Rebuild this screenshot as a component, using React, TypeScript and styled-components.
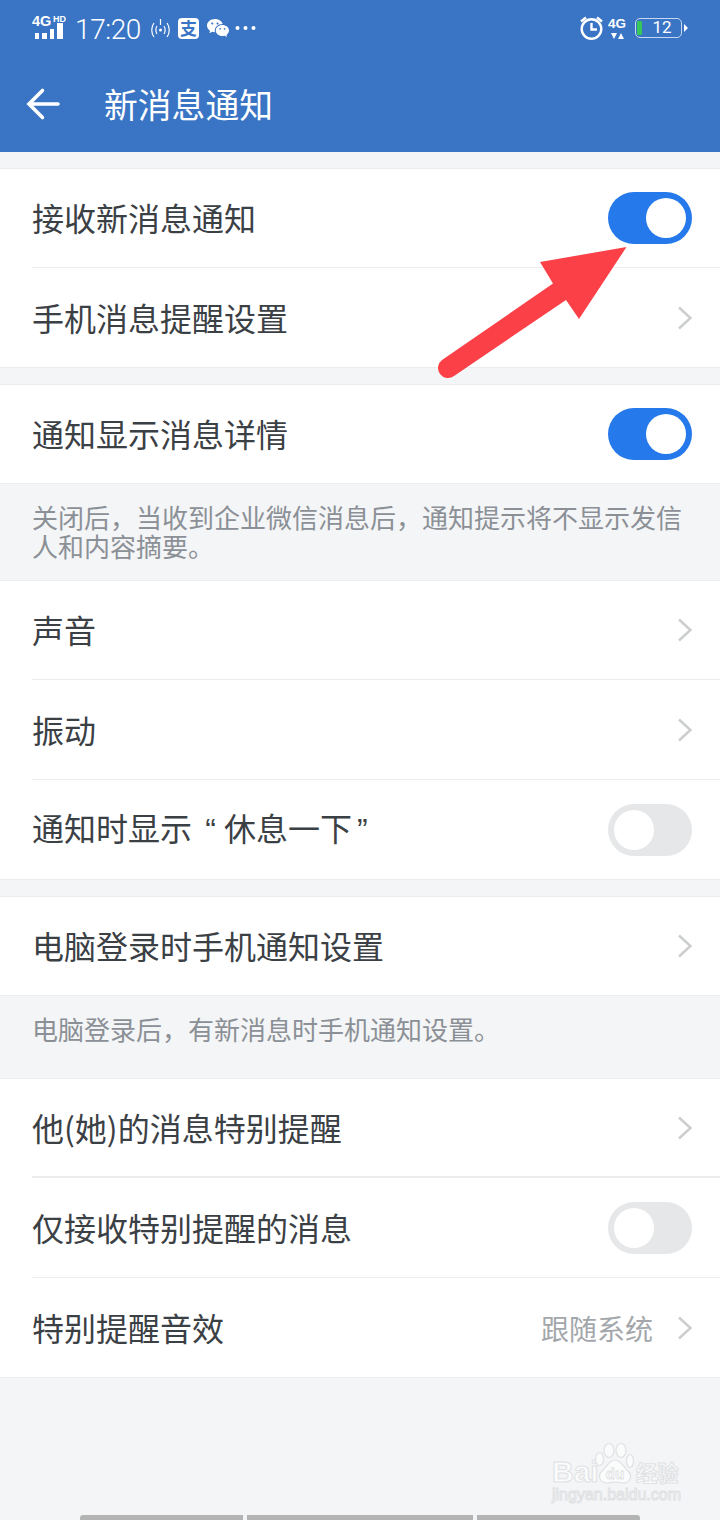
import React from 'react';
import styled, { createGlobalStyle } from 'styled-components';
import { RiWechatFill } from 'react-icons/ri';

const cjk = `'Noto Sans CJK SC', 'Noto Sans', sans-serif`;

const GlobalStyle = createGlobalStyle`
	html,
	body {
		margin: 0;
		padding: 0;
		background: #f4f5f7;
	}
	* {
		box-sizing: border-box;
	}
`;

const Page = styled.div`
	position: relative;
	width: 720px;
	height: 1520px;
	overflow: hidden;
	background: #f4f5f7;
	font-family: ${cjk};
	color: #3b4045;
`;

const Header = styled.header`
	height: 152px;
	background: #3a75c5;
	color: #fff;
	margin-bottom: 16px;
`;

const StatusBar = styled.div`
	height: 56px;
	padding: 0 32px;
	display: flex;
	align-items: center;
	justify-content: space-between;
`;

const StatusGroup = styled.div`
	display: flex;
	align-items: center;
`;

const Time = styled.span`
	font-family: Roboto, 'Liberation Sans', sans-serif;
	font-size: 28px;
	font-weight: 300;
	letter-spacing: -0.4px;
	margin: 2px 9px 0 9px;
`;

const AlipayBadge = styled.span`
	width: 21px;
	height: 21px;
	margin: 0 7px 0 7px;
	border-radius: 4px;
	background: #fff;
	color: #3a75c5;
	font-size: 17px;
	font-weight: 700;
	line-height: 20px;
	text-align: center;
`;

const WechatIcon = styled(RiWechatFill)`
	margin-right: 5px;
`;

const BatteryBody = styled.div`
	position: relative;
	width: 47px;
	height: 20px;
	margin-left: 9px;
	border: 1.5px solid #c6d8f0;
	border-radius: 5px;
	font-family: Roboto, 'Liberation Sans', sans-serif;
	font-size: 17px;
	line-height: 17px;
	text-align: center;
	padding-left: 7px;
`;

const BatteryLevel = styled.span`
	position: absolute;
	left: 1px;
	top: 1.5px;
	width: 5px;
	height: 14px;
	border-radius: 1px;
	background: #35c75a;
`;

const BatteryTip = styled.span`
	width: 0;
	height: 0;
	margin-left: 2px;
	border-left: 4px solid #fff;
	border-top: 4.5px solid transparent;
	border-bottom: 4.5px solid transparent;
`;

const NavBar = styled.div`
	height: 96px;
	padding-left: 26px;
	display: flex;
	align-items: center;
`;

const Title = styled.h1`
	margin: 0 0 0 42px;
	font-size: 33.8px;
	font-weight: 400;
	line-height: 1;
`;

const Section = styled.section<{ $gap?: number }>`
	background: #fff;
	border-top: 1px solid #ebecee;
	margin-bottom: ${(p) => p.$gap ?? 0}px;
`;

const Row = styled.div`
	height: 100px;
	padding-left: 32px;
	&:first-child {
		height: 99px;
	}
	&:last-child {
		border-bottom: 1px solid #ebecee;
	}
`;

const RowBody = styled.div<{ $heavy?: boolean }>`
	height: 100%;
	display: flex;
	align-items: center;
	justify-content: space-between;
	padding-right: 28px;
	border-bottom: ${(p) => (p.$heavy ? 2 : 1)}px solid #ebecee;
	${Row}:last-child & {
		border-bottom: none;
	}
`;

const RowLabel = styled.span`
	font-size: 32px;
	line-height: 1;
	margin-bottom: 2px;
	white-space: nowrap;
`;

const Quote = styled.span<{ $closing?: boolean }>`
	display: inline-block;
	width: 32px;
	font-family: 'Liberation Sans', sans-serif;
	text-align: ${(p) => (p.$closing ? 'left' : 'right')};
	padding: ${(p) => (p.$closing ? '0 0 0 5px' : '0 8px 0 0')};
`;

const RowEnd = styled.div`
	display: flex;
	align-items: center;
`;

const RowValue = styled.span`
	font-size: 28px;
	color: #a3a7ab;
	margin-right: 25px;
`;

const Switch = styled.span<{ $on?: boolean }>`
	display: flex;
	justify-content: ${(p) => (p.$on ? 'flex-end' : 'flex-start')};
	align-items: center;
	width: 84px;
	height: 52px;
	padding: 0 6px;
	border-radius: 26px;
	background: ${(p) => (p.$on ? '#2579ea' : '#e6e7e8')};
	&::after {
		content: '';
		width: 40px;
		height: 40px;
		border-radius: 50%;
		background: #fff;
	}
`;

const Note = styled.p<{ $height: number }>`
	height: ${(p) => p.$height}px;
	margin: 0;
	padding: 18px 32px 0;
	font-size: 26px;
	line-height: 29px;
	color: #8b9096;
`;

const Arrow = styled.svg`
	position: absolute;
	left: 430px;
	top: 240px;
`;

const Watermark = styled.div`
	position: absolute;
	left: 552px;
	top: 1441px;
	width: 140px;
	color: #fafbfb;
	-webkit-text-stroke: 1px #dfe1e3;
	font-family: 'Liberation Sans', sans-serif;
`;

const WatermarkLogo = styled.div`
	display: flex;
	align-items: flex-end;
	height: 46px;
	font-size: 30px;
	font-weight: 700;
	line-height: 30px;
`;

const WatermarkPaw = styled.svg`
	flex: none;
	margin-left: -5px;
`;

const WatermarkCjk = styled.span`
	font-family: ${cjk};
	font-size: 21.5px;
	margin-left: 1px;
	white-space: nowrap;
`;

const WatermarkUrl = styled.div`
	margin-top: -2px;
	font-size: 16px;
	line-height: 20px;
	white-space: nowrap;
`;

const NavIndicator = styled.div`
	position: absolute;
	left: 80px;
	bottom: 0;
	display: flex;
	gap: 4px;
`;

const NavSegment = styled.span<{ $width: number; $first?: boolean; $last?: boolean }>`
	width: ${(p) => p.$width}px;
	height: 5px;
	background: #b3b4b3;
	border-radius: ${(p) => (p.$first ? '3px' : '0')} ${(p) => (p.$last ? '3px' : '0')} 0 0;
`;

const Chevron = () => (
	<svg width="14" height="24" viewBox="0 0 14 24" fill="none">
		<path d="M1 1.5L12.5 12 1 22.5" stroke="#cbcdce" strokeWidth="2.5" />
	</svg>
);

const Signal = () => (
	<svg width="34" height="30" viewBox="0 -2 34 30" fill="#fff">
		<text x="0" y="11" fontFamily="'Liberation Sans', sans-serif" fontWeight="700" fontSize="14.5">4G</text>
		<text x="21" y="7" fontFamily="'Liberation Sans', sans-serif" fontWeight="700" fontSize="9">HD</text>
		<rect x="3" y="18" width="4" height="6" />
		<rect x="10" y="18" width="5" height="6" />
		<rect x="18" y="14" width="4" height="10" />
		<rect x="25" y="8" width="6" height="16" />
	</svg>
);

const Hotspot = () => (
	<svg width="21" height="24" viewBox="0 0 21 24" fill="none" stroke="#fff" strokeWidth="1.2">
		<path d="M4 7c-3 4-3 10 0 14M17 7c3 4 3 10 0 14M7 10c-1.5 2-1.5 6 0 8M14 10c1.5 2 1.5 6 0 8M10.5 3v6" />
		<circle cx="10.5" cy="14" r="1.5" fill="#fff" stroke="none" />
	</svg>
);

const Dots = () => (
	<svg width="21" height="6" viewBox="0 0 21 6" fill="#fff">
		<circle cx="2.5" cy="3" r="2" />
		<circle cx="10.5" cy="3" r="2" />
		<circle cx="18.5" cy="3" r="2" />
	</svg>
);

const Alarm = () => (
	<svg width="24" height="24" viewBox="0 0 24 24" fill="none" stroke="#fff" strokeWidth="2.4" style={{ marginRight: 4 }}>
		<circle cx="11.5" cy="13" r="9.8" />
		<path d="M1 5.5L6 1.5M17 1.5L22 5.5M11.5 7v6.5H17" />
	</svg>
);

const Network = () => (
	<svg width="18" height="24" viewBox="0 0 18 24" fill="#fff">
		<text x="0" y="12" fontFamily="'Liberation Sans', sans-serif" fontWeight="700" fontSize="13.5">4G</text>
		<path d="M3 17h6l-3 6zM10 23h6l-3-6z" />
	</svg>
);

const BackArrow = () => (
	<svg width="36" height="36" viewBox="0 0 36 36" fill="none" stroke="#fff" strokeWidth="3.6" strokeLinecap="round">
		<path d="M32 18H4M16.5 4.5L3 18l13.5 13.5" />
	</svg>
);

const Paw = () => (
	<WatermarkPaw width="41" height="46" viewBox="0 0 41 46" fill="#fafbfb" stroke="#dfe1e3" strokeWidth="1.2">
		<ellipse cx="5.5" cy="18" rx="4" ry="6.5" />
		<ellipse cx="15" cy="9.5" rx="5" ry="7" />
		<ellipse cx="27" cy="9.5" rx="5" ry="7" />
		<ellipse cx="36" cy="20" rx="3.5" ry="6.5" />
		<path d="M21 19c-6 0-8 7-13 11-5 5-2 12 5 12 3 0 6-1 8-1s5 1 8 1c7 0 10-7 5-12-5-4-7-11-13-11z" />
		<text x="21" y="38" textAnchor="middle" fontSize="15" fontWeight="700" strokeWidth="0.8">du</text>
	</WatermarkPaw>
);

const App = () => {
	return (
		<Page>
			<GlobalStyle />
			<Header>
				<StatusBar>
					<StatusGroup>
						<Signal />
						<Time>17:20</Time>
						<Hotspot />
						<AlipayBadge>支</AlipayBadge>
						<WechatIcon size={24} />
						<Dots />
					</StatusGroup>
					<StatusGroup>
						<Alarm />
						<Network />
						<BatteryBody>
							<BatteryLevel />
							12
						</BatteryBody>
						<BatteryTip />
					</StatusGroup>
				</StatusBar>
				<NavBar>
					<BackArrow />
					<Title>新消息通知</Title>
				</NavBar>
			</Header>

			<Section $gap={16}>
				<Row>
					<RowBody>
						<RowLabel>接收新消息通知</RowLabel>
						<Switch $on />
					</RowBody>
				</Row>
				<Row>
					<RowBody>
						<RowLabel>手机消息提醒设置</RowLabel>
						<Chevron />
					</RowBody>
				</Row>
			</Section>

			<Section>
				<Row>
					<RowBody>
						<RowLabel>通知显示消息详情</RowLabel>
						<Switch $on />
					</RowBody>
				</Row>
			</Section>
			<Note $height={96}>关闭后，当收到企业微信消息后，通知提示将不显示发信人和内容摘要。</Note>

			<Section $gap={16}>
				<Row>
					<RowBody>
						<RowLabel>声音</RowLabel>
						<Chevron />
					</RowBody>
				</Row>
				<Row>
					<RowBody>
						<RowLabel>振动</RowLabel>
						<Chevron />
					</RowBody>
				</Row>
				<Row>
					<RowBody>
						<RowLabel>
							通知时显示<Quote>“</Quote>休息一下<Quote $closing>”</Quote>
						</RowLabel>
						<Switch />
					</RowBody>
				</Row>
			</Section>

			<Section>
				<Row>
					<RowBody>
						<RowLabel>电脑登录时手机通知设置</RowLabel>
						<Chevron />
					</RowBody>
				</Row>
			</Section>
			<Note $height={82}>电脑登录后，有新消息时手机通知设置。</Note>

			<Section>
				<Row>
					<RowBody $heavy>
						<RowLabel>他(她)的消息特别提醒</RowLabel>
						<Chevron />
					</RowBody>
				</Row>
				<Row>
					<RowBody>
						<RowLabel>仅接收特别提醒的消息</RowLabel>
						<Switch />
					</RowBody>
				</Row>
				<Row>
					<RowBody>
						<RowLabel>特别提醒音效</RowLabel>
						<RowEnd>
							<RowValue>跟随系统</RowValue>
							<Chevron />
						</RowEnd>
					</RowBody>
				</Row>
			</Section>

			<Arrow width="210" height="150" viewBox="0 0 210 150">
				<path d="M196.5 7L110 22l13 21.5L12 120a10 10 0 0 0 12 16L136 60l13 19z" fill="#fb4048" />
			</Arrow>

			<Watermark>
				<WatermarkLogo>
					Bai
					<Paw />
					<WatermarkCjk>经验</WatermarkCjk>
				</WatermarkLogo>
				<WatermarkUrl>jingyan.baidu.com</WatermarkUrl>
			</Watermark>

			<NavIndicator>
				<NavSegment $width={163} $first />
				<NavSegment $width={226} />
				<NavSegment $width={163} $last />
			</NavIndicator>
		</Page>
	);
};

export default App;
